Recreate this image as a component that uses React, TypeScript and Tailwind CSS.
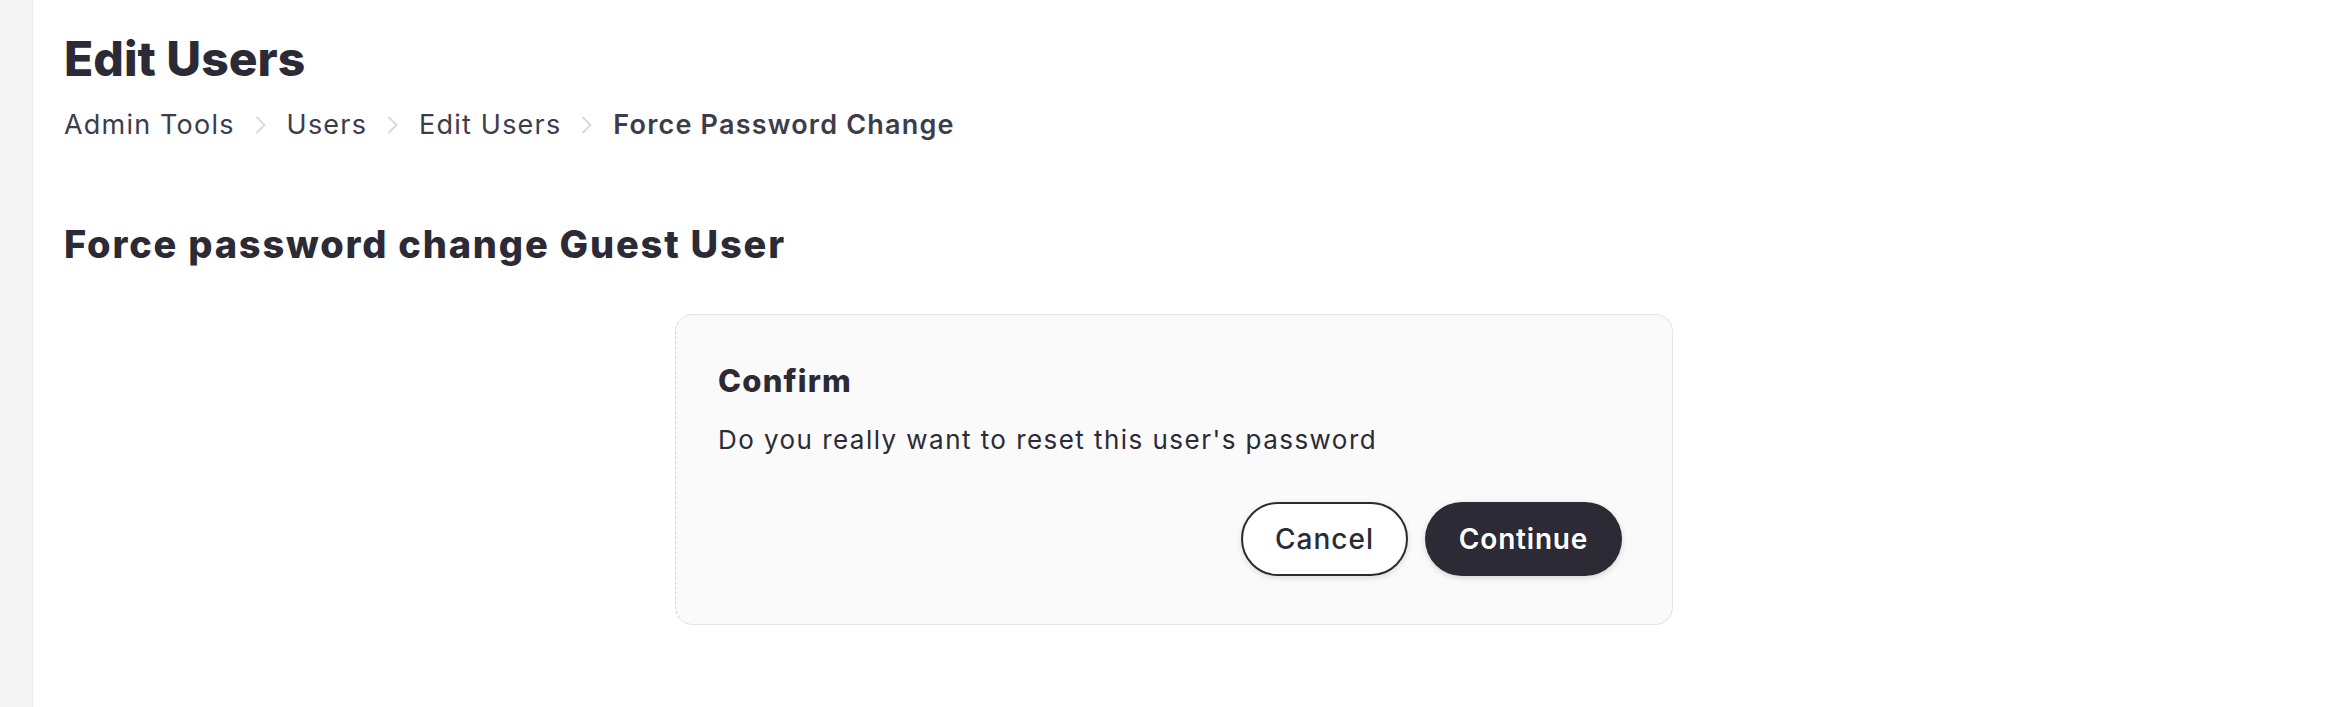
import React from 'react';

const crumbs = ['Admin Tools', 'Users', 'Edit Users'];

function Chevron() {
  return (
    <svg width="14" height="18" viewBox="0 0 14 18" fill="none" className="mx-[19px] shrink-0">
      <path d="M3 1.5 L10.5 9 L3 16.5" stroke="#d9d9e0" strokeWidth="2" strokeLinecap="round" strokeLinejoin="round" />
    </svg>
  );
}

function App() {
  return (
    <div className="flex min-h-[707px] bg-white font-['Inter',sans-serif] text-[#2b2a35]">
      <aside className="w-[33px] shrink-0 bg-[#f4f4f4] border-r border-[#ececec]" />
      <main className="flex-1 pl-[31px] pr-[50px] pt-[30px]">
        <h1 className="text-[48px] leading-[58px] font-extrabold tracking-[0px]">Edit Users</h1>

        <nav className="mt-[19px] flex items-center text-[27px] leading-[36px] tracking-[1.2px] text-[#3d3c4b]">
          {crumbs.map((c) => (
            <React.Fragment key={c}>
              <span>{c}</span>
              <Chevron />
            </React.Fragment>
          ))}
          <span className="font-semibold">Force Password Change</span>
        </nav>

        <h2 className="mt-[78px] text-[38px] leading-[46px] font-extrabold tracking-[1.8px]">Force password change Guest User</h2>

        <div className="mt-[47px] flex justify-center">
          <div className="w-[998px] rounded-[18px] border-[1.5px] border-[#e4e4e4] [border-left-style:dashed] border-l-[#d4d4d4] bg-[#fafafa] pl-[42px] pr-[50px] pt-[47px] pb-[48px]">
            <h3 className="text-[31px] leading-[38px] font-extrabold tracking-[1.2px]">Confirm</h3>
            <p className="mt-[22px] text-[26px] leading-[36px] tracking-[1.45px]">Do you really want to reset this user's password</p>
            <div className="mt-[44px] flex justify-end gap-[17px]">
              <button className="h-[74px] w-[167px] rounded-full border-2 border-[#2b2a35] bg-white text-[28px] font-medium tracking-[1px] shadow-[0_2px_6px_rgba(0,0,0,0.12)]">
                Cancel
              </button>
              <button className="h-[74px] w-[197px] rounded-full bg-[#2b2a35] text-[28px] font-semibold tracking-[0.8px] text-white shadow-[0_2px_6px_rgba(0,0,0,0.15)]">
                Continue
              </button>
            </div>
          </div>
        </div>
      </main>
    </div>
  );
}

export default App;
